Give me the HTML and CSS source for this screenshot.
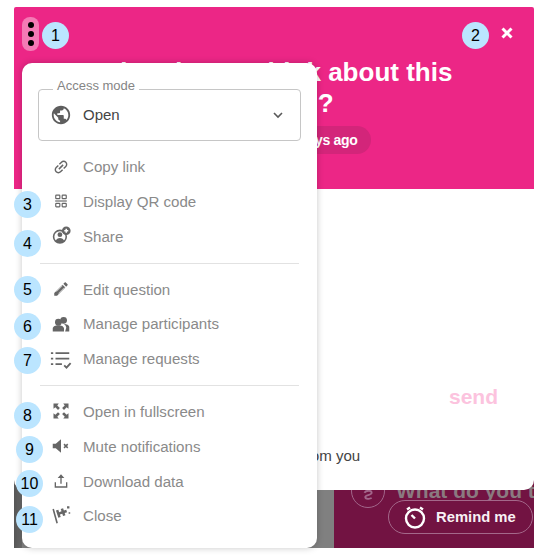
FILE: index.html
```html
<!DOCTYPE html>
<html lang="en">
<head>
<meta charset="utf-8">
<title>Question menu</title>
<link rel="stylesheet" href="styles.css">
</head>
<body>
<div class="stage">
  <div class="card">
    <header class="head">
      <div class="head-bar">
        <button class="dots"><i></i><i></i><i></i></button>
        <svg class="close" viewBox="0 0 12 12"><path d="M1.500 1.500l9 9M10.500 1.500l-9 9"/></svg>
      </div>
      <h1 class="title">What do you think about this<br><span class="title-q">question ?</span></h1>
      <div class="pill">Created 2 days ago</div>
    </header>
    <section class="body">
      <div class="send-row"><span class="send">send</span></div>
      <p class="note">Awaiting answer from you</p>
    </section>
  </div>
  <div class="under">
    <div class="under-grey"></div>
    <div class="under-main">
      <div class="under-top">
        <span class="ring"><svg viewBox="0 0 24 24"><path d="M8 14c2-3 8-3 8 0s-7 2-7 4.500 5 2.500 7 1"/></svg></span>
        <span class="under-title">What do you think about this</span>
      </div>
      <button class="remind">
        <svg viewBox="0 0 24 24"><circle cx="12" cy="13.500" r="9"/><path d="M4 4.500L7 2.500M20 4.500L17 2.500M8.500 10l3.500 3.500"/></svg>
        <span>Remind me</span>
      </button>
    </div>
  </div>

  <nav class="menu">
    <div class="select">
      <span class="legend">Access mode</span>
      <svg class="globe" viewBox="0 0 24 24"><path d="M12 2C6.480 2 2 6.480 2 12s4.480 10 10 10 10-4.480 10-10S17.520 2 12 2zm-1 17.930c-3.950-.49-7-3.850-7-7.930 0-.62.08-1.210.21-1.790L9 15v1c0 1.100.9 2 2 2v1.930zm6.900-2.540c-.26-.81-1-1.390-1.900-1.390h-1v-3c0-.55-.45-1-1-1H8v-2h2c.55 0 1-.45 1-1V7h2c1.100 0 2-.9 2-2v-.41c2.930 1.190 5 4.060 5 7.410 0 2.080-.8 3.970-2.100 5.390z"/></svg>
      <span class="select-val">Open</span>
      <svg class="chev" viewBox="0 0 12 12"><path d="M2 4l4 4 4-4"/></svg>
    </div>
    <ul class="group">
      <li class="item"><svg class="ico ico-link" viewBox="0 0 24 24"><g transform="rotate(-45 12 12)"><path d="M3.900 12c0-1.710 1.390-3.100 3.100-3.100h4V7H7c-2.760 0-5 2.240-5 5s2.240 5 5 5h4v-1.900H7c-1.710 0-3.100-1.390-3.100-3.100zM8 13h8v-2H8v2zm9-6h-4v1.900h4c1.710 0 3.100 1.390 3.100 3.100s-1.390 3.100-3.100 3.100h-4V17h4c2.760 0 5-2.240 5-5s-2.240-5-5-5z"/></g></svg>Copy link</li>
      <li class="item"><svg class="ico ico-qr" viewBox="0 0 24 24"><g class="ln"><rect x="3" y="2" width="7" height="6" rx="1"/><rect x="14" y="2" width="7" height="6" rx="1"/><rect x="3" y="16" width="7" height="6" rx="1"/><rect x="14" y="16" width="7" height="6" rx="1"/></g><path d="M2 11h20v2H2z"/></svg>Display QR code</li>
      <li class="item"><svg class="ico ico-wide" viewBox="0 0 24 24"><circle class="ln" cx="10" cy="13.500" r="8"/><circle cx="10" cy="11" r="3"/><path d="M4.500 19c1-3 3-4 5.500-4s4.500 1 5.500 4l-3 2.500h-5z"/><circle cx="18" cy="6" r="5.500"/><path class="pl" d="M18 3.500v5M15.500 6h5"/></svg>Share</li>
    </ul>
    <hr class="rule">
    <ul class="group">
      <li class="item"><svg class="ico ico-link" viewBox="0 0 24 24"><path d="M3 17.250V21h3.750L17.810 9.940l-3.750-3.750L3 17.250zM20.710 7.040c.39-.39.39-1.020 0-1.410l-2.340-2.340c-.39-.39-1.020-.39-1.410 0l-1.830 1.830 3.750 3.750 1.830-1.830z"/><path class="pl pl-thin" d="M6 15.500l8-8M8.500 18l8-8"/></svg>Edit question</li>
      <li class="item"><svg class="ico ico-people" viewBox="0 0 24 24"><circle cx="15.500" cy="7" r="4.500"/><circle cx="8.500" cy="9.500" r="4.500"/><path d="M1 22v-4c0-3 4-4.500 7.500-4.500s7.500 1.500 7.500 4.500v4zM17.500 22H23v-6c0-2.500-3.500-4-7-4 1.500 1 3 3 3 5z"/></svg>Manage participants</li>
      <li class="item"><svg class="ico ico-list" viewBox="0 0 24 24"><path d="M1 4.500h2.500v2H1zM6 4.500h15v2H6zM1 10.500h2.500v2H1zM6 10.500h15v2H6zM1 16.500h2.500v2H1zM6 16.500h7v2H6z"/><path class="ln" d="M15.500 19l2.500 2.500 4.500-5"/></svg>Manage requests</li>
    </ul>
    <hr class="rule">
    <ul class="group">
      <li class="item"><svg class="ico ico-link" viewBox="0 0 24 24"><path d="M2 2h7L7 4.500l3.500 3.500L8 10.500 4.500 7 2 9zM22 2v7l-2.500-2L16 10.500 13.500 8 17 4.500 15 2zM2 22v-7l2.500 2L8 13.500l2.500 2.500L7 19.500 9 22zM22 22h-7l2-2.500-3.500-3.500 2.500-2.500 3.500 3.500 2.500-2z"/></svg>Open in fullscreen</li>
      <li class="item"><svg class="ico ico-link" viewBox="0 0 24 24"><path d="M1 9v6h4l7 6V3L5 9z"/><path class="ln" d="M16 9.500l5 5M21 9.500l-5 5"/></svg>Mute notifications</li>
      <li class="item"><svg class="ico" viewBox="0 0 24 24"><path d="M12 2l5 5.500h-4V16h-2V7.500H7z"/><path class="ln" d="M3.500 14v7h17v-7"/></svg>Download data</li>
      <li class="item"><svg class="ico ico-wide" viewBox="0 0 24 24"><path class="ln" d="M1.500 5l5 18"/><path d="M5 7l3-1 1 3 3-1-1-3 3-1 1 3 3-1 1 3-3 1 1 3-3 1-1-3-3 1 1 3-3 1zM19 1.500h3v3h-3zM21 9h2v2h-2z"/></svg>Close</li>
    </ul>
  </nav>

  <span class="badge b1">1</span>
  <span class="badge b2">2</span>
  <span class="badge b3">3</span>
  <span class="badge b4">4</span>
  <span class="badge b5">5</span>
  <span class="badge b6">6</span>
  <span class="badge b7">7</span>
  <span class="badge b8">8</span>
  <span class="badge b9">9</span>
  <span class="badge b10">10</span>
  <span class="badge b11">11</span>
</div>
</body>
</html>
```
FILE: styles.css
```css
* { box-sizing: border-box; }
html, body { margin: 0; padding: 0; background: #fff; }
body { font-family: "Liberation Sans", Arial, sans-serif; overflow: hidden; }
ul { list-style: none; margin: 0; padding: 0; }

.stage { position: relative; width: 534px; height: 557px; padding: 7px 0 0 14px; }

.card { position: relative; z-index: 1; width: 520px; height: 483px; display: flex; flex-direction: column; border-radius: 2px 2px 10px 10px; overflow: hidden; background: #fff; }

.head { height: 182px; background: #ec2686; color: #fff; display: flex; flex-direction: column; align-items: center; }
.head-bar { align-self: stretch; display: flex; justify-content: space-between; align-items: flex-start; padding: 10px 21px 0 8px; height: 50px; }
.dots { width: 17px; height: 34px; padding: 0; border: 0; border-radius: 8px; background: #f47ab5; display: flex; flex-direction: column; align-items: center; justify-content: center; gap: 3px; }
.dots i { width: 6px; height: 6px; border-radius: 50%; background: #000; }
.close { width: 12px; height: 12px; margin-top: 10px; fill: none; stroke: #fff; stroke-width: 3; }

.title { margin: 0; font-size: 26px; line-height: 31px; font-weight: 700; text-align: center; }
.title-q { display: inline-block; padding-right: 12px; }
.pill { margin: 7px 0 0 44px; height: 28px; padding: 0 13px; border-radius: 14px; background: #d3257a; font-size: 14px; font-weight: 700; line-height: 28px; letter-spacing: -.3px; }

.body { flex: 1; display: flex; flex-direction: column; }
.send-row { display: flex; justify-content: flex-end; padding: 195px 36px 0 0; }
.send { font-size: 21px; line-height: 26px; font-weight: 700; color: #fcc3de; }
.note { margin: 37px 0 0; text-align: center; font-size: 15.100px; line-height: 18px; color: #444; }

.under { display: flex; width: 520px; height: 78px; margin-top: -20px; overflow: hidden; }
.under-grey { width: 320px; background: linear-gradient(90deg, #565656, #6a6a6a 8px, #808080 8px); }
.under-main { flex: 1; background: #721342; padding: 4px 0 0 17px; position: relative; overflow: hidden; }
.under-top { display: flex; gap: 11px; white-space: nowrap; align-items: flex-start; }
.ring { width: 34px; height: 34px; flex: none; border: 1px solid #a2668a; border-radius: 50%; display: flex; align-items: center; justify-content: center; }
.ring svg { width: 22px; height: 22px; fill: none; stroke: #a2668a; stroke-width: 2; }
.under-title { margin-top: 2px; font-size: 21px; line-height: 30px; font-weight: 700; color: #8a7a80; }
.remind { position: absolute; left: 54px; top: 30px; width: 145px; height: 34px; border: 1px solid #a4688a; border-radius: 17px; background: #721342; color: #f8f0f4; font: 700 14.800px "Liberation Sans", Arial, sans-serif; display: flex; align-items: center; gap: 9px; padding: 0 0 0 14px; }
.remind svg { width: 24px; height: 24px; fill: none; stroke: #fff; stroke-width: 2.400; }

.menu { position: absolute; z-index: 2; left: 22px; top: 63px; width: 295px; height: 485px; padding: 26px 16px 0; background: #fff; border-radius: 10px; box-shadow: 0 0 7px rgba(0,0,0,.22); }
.select { position: relative; height: 52px; margin-bottom: 8.500px; border: 1px solid #c6c6c6; border-radius: 4px; display: flex; align-items: center; padding: 0 16px 1px 12px; }
.legend { position: absolute; left: 14px; top: -12px; padding: 0 4px; background: #fff; font-size: 13px; line-height: 16px; color: #858585; }
.globe { width: 20px; height: 20px; fill: #5e5e5e; transform: scale(1.1); }
.select-val { flex: 1; margin-left: 12px; font-size: 15px; color: #444; }
.chev { width: 12px; height: 12px; fill: none; stroke: #5a5a5a; stroke-width: 1.600; }

.item { height: 34.670px; display: flex; align-items: center; font-size: 15.100px; color: #8a8a8a; padding-left: 45px; position: relative; }
.ico { position: absolute; left: 15px; top: 9px; width: 16px; height: 16px; fill: #666; }
.ico-link { left: 14px; top: 8px; width: 18px; height: 18px; }
.ico-qr { left: 16px; top: 10px; width: 14px; height: 14px; }
.ico-people { left: 14px; top: 8px; width: 18px; height: 18px; }
.ico-wide { left: 14px; top: 7px; width: 19px; height: 19px; }
.ico-list { left: 12px; top: 7px; width: 22px; height: 22px; }
.ln { fill: none; stroke: #666; stroke-width: 2; }
.pl { fill: none; stroke: #fff; stroke-width: 2; }
.pl-thin { stroke-width: .8; }

.rule { margin: 9.500px 2px 8px; border: 0; border-top: 1px solid #e2e2e2; height: 0; }

.badge { position: absolute; z-index: 3; width: 27px; height: 27px; border-radius: 50%; background: #bbe5ff; color: #000; font-size: 16px; line-height: 27px; text-align: center; }
.b1 { left: 42px; top: 22px; }
.b2 { left: 462px; top: 22px; }
.b3 { left: 14px; top: 191px; }
.b4 { left: 14px; top: 230px; }
.b5 { left: 14px; top: 276px; }
.b6 { left: 14px; top: 313px; }
.b7 { left: 14px; top: 347px; }
.b8 { left: 14px; top: 402px; }
.b9 { left: 16px; top: 436px; }
.b10 { left: 16px; top: 470px; }
.b11 { left: 16px; top: 506px; }
```
